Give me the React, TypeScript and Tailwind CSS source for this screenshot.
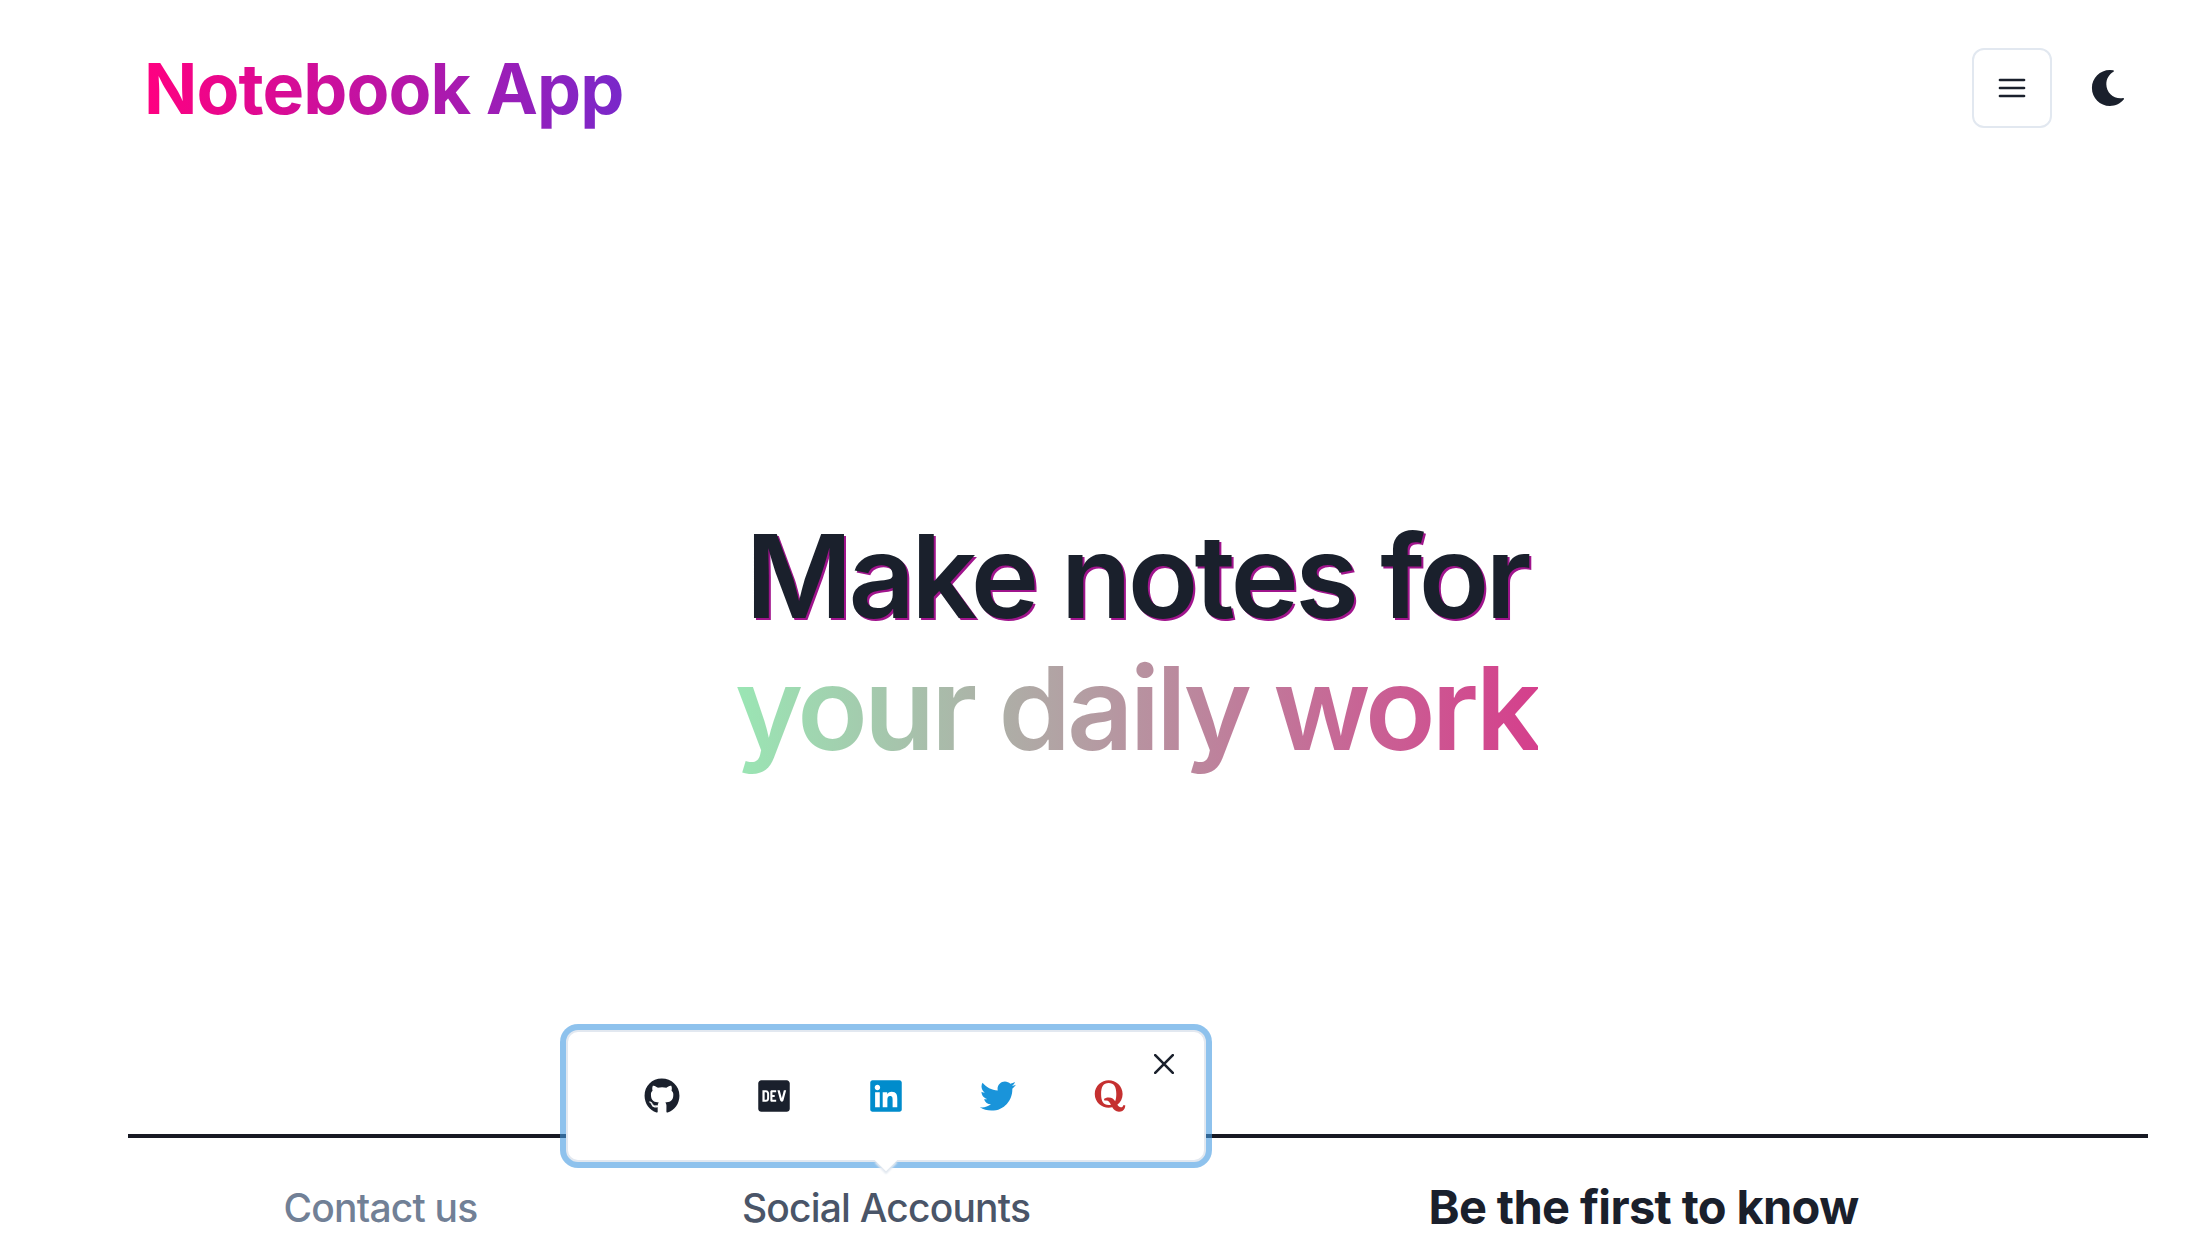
import { FaMoon, FaGithub, FaDev, FaLinkedin, FaTwitter, FaQuora } from "react-icons/fa";

function SocialPopover() {
  return (
    <div className="absolute left-1/2 top-[-148px] h-[132px] w-[640px] -translate-x-1/2 rounded-xl border-2 border-[#e2e8f0] bg-white shadow-[0_0_0_6px_rgba(66,153,225,0.6)]">
      <div className="absolute bottom-[-8px] left-1/2 size-4 -translate-x-1/2 rotate-45 bg-white shadow-[2px_2px_2px_0_#e2e8f0]" />
      <div className="relative grid h-full grid-cols-[repeat(5,112px)] place-items-center justify-center text-[36px]">
        <FaGithub className="text-[#1a202c]" />
        <FaDev className="text-[#1a202c]" />
        <FaLinkedin className="text-[#008ccc]" />
        <FaTwitter className="text-[#1a94da]" />
        <FaQuora className="text-[#c53030]" />
      </div>
      <button className="absolute right-[30px] top-[22px]">
        <svg className="size-5" viewBox="0 0 20 20" stroke="#1a202c" strokeWidth="2.6" strokeLinecap="round"><path d="M1.2 1.2 18.8 18.8M18.8 1.2 1.2 18.8" /></svg>
      </button>
    </div>
  );
}

export default function App() {
  return (
    <div className="h-[1240px] w-full overflow-hidden bg-white pl-32 pr-[54px] font-['Inter',sans-serif] text-[#1a202c]">
      <header className="flex h-[176px] items-center justify-between pl-[16px] pr-[22px]">
        <h1 className="mt-[2px] bg-linear-to-l/srgb from-[#7928CA] to-[#FF0080] bg-clip-text text-[70px] font-bold leading-[90px] tracking-[-0.93px] text-transparent">Notebook App</h1>
        <div className="flex items-center gap-[38px]">
          <button className="flex size-20 items-center justify-center rounded-xl border-2 border-[#e2e8f0]">
            <svg className="size-7" viewBox="0 0 28 28" stroke="currentColor" strokeWidth="2.7" strokeLinecap="round"><path d="M2 6h24M2 14h24M2 22h24" /></svg>
          </button>
          <FaMoon className="size-9" />
        </div>
      </header>
      <main className="h-[958px] pr-[3px] pt-[334px] text-center text-[116px] font-semibold leading-[132px] tracking-[-3.9px]">
        <p className="[text-shadow:2px_2px_#a0148c]">Make notes for</p>
        <p><span className="bg-linear-to-r/srgb from-[#9AE6B4] to-[#D53F8C] bg-clip-text text-transparent">your daily work</span></p>
      </main>
      <footer className="flex border-t-4 border-[#171923] pt-[40px]">
        <div className="w-[505px] text-center text-[39px] font-medium leading-[60px] tracking-[-0.8px] text-[#718096]">Contact us</div>
        <div className="relative w-[506px] text-center text-[39px] font-medium leading-[60px] tracking-[-0.8px] text-[#4a5568]">
          Social Accounts
          <SocialPopover />
        </div>
        <div className="w-[1009px] text-center text-[47px] font-bold leading-[58px] tracking-[-0.65px]">Be the first to know</div>
      </footer>
    </div>
  );
}
